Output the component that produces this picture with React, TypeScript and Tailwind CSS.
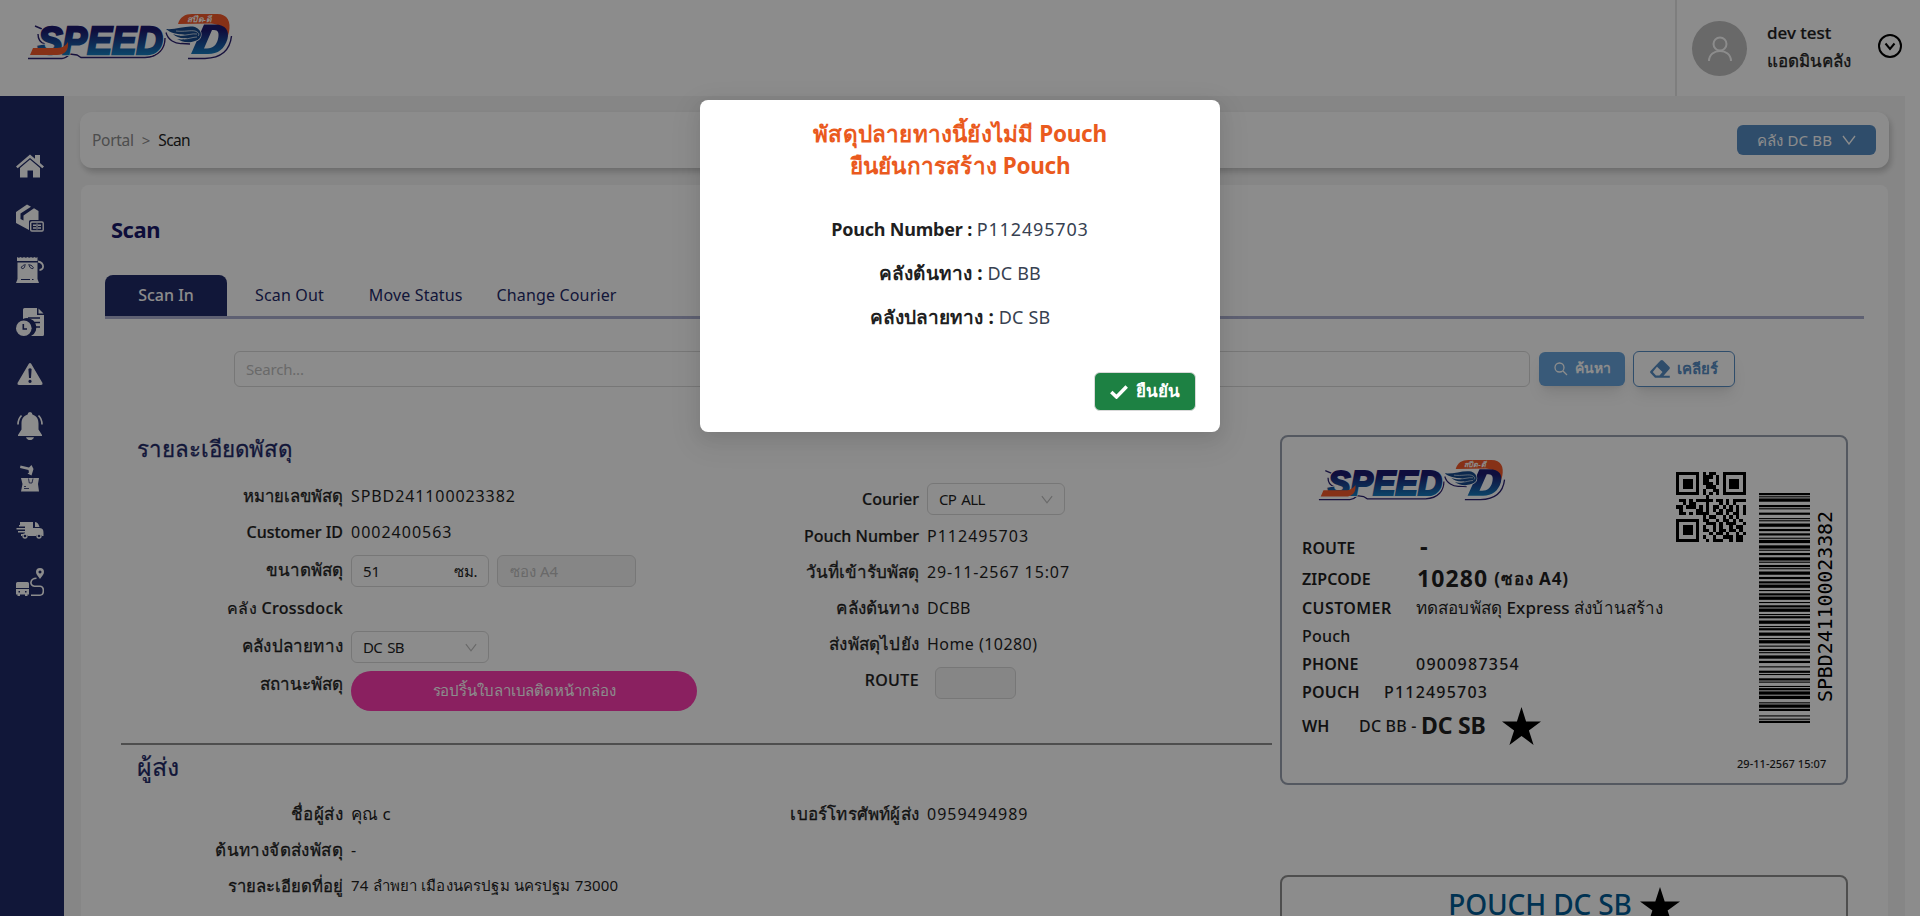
import React from 'react';

const QR = [
  '#######.#.##..#######',
  '#.....#.###.#.#.....#',
  '#.###.#.##..#.#.###.#',
  '#.###.#.###.#.#.###.#',
  '#.###.#..###..#.###.#',
  '#.....#.#..##.#.....#',
  '#######.#.#.#.#######',
  '.........#...........',
  '.##.#.#####.##.#.####',
  '..#.##...#...#.#.#...',
  '##.###.#.#.##.#.#.#.#',
  '.#....##.#.#.#.##.#.#',
  '.##.#.####..##.#.##.#',
  '........#.##..#.#.#..',
  '#######.##..#.##.#.#.',
  '#.....#..###.#.###..#',
  '#.###.#.#..#.#..#.##.',
  '#.###.#.##.#.##.##.#.',
  '#.###.#...#.##.#..#.#',
  '#.....#.#..#..###.##.',
  '#######..#.###..#.##.',
];

const CODE128 = [
  '211214', '213113', '313121', '131123', '112313', '223211', '221231', '123221', '123221',
  '123122', '123122', '123122', '223211', '221132', '221132', '311222', '223211', '132311', '2331112',
].join('');

function barRects() {
  const out: { x: number; w: number }[] = [];
  let x = 0;
  CODE128.split('').forEach((c, i) => {
    const w = Number(c);
    if (i % 2 === 0) out.push({ x, w });
    x += w;
  });
  return out;
}

function Logo({ className, id }: { className: string; id: string }) {
  return (
    <svg viewBox="0 0 205 46" className={`overflow-visible ${className}`} preserveAspectRatio="none">
      <defs>
        <linearGradient id={id} gradientUnits="userSpaceOnUse" x1="0" y1="10" x2="0" y2="42">
          <stop offset="0.2" stopColor="#1d1a70" />
          <stop offset="1" stopColor="#1583c4" />
        </linearGradient>
      </defs>
      <g fontFamily="Liberation Sans" fontWeight="bold" fontStyle="italic">
        <path d="M1 44.500 L35 44.500 C39 44.500 41 42 43 40 L50 41 L54 43.500 H118 C132 43 138 34 138 24" fill="none" stroke="#2a2170" strokeWidth="1.400" />
        <path d="M8 12 L15 15 M11 20 C11 26 14 29 18 30" fill="none" stroke="#2a2170" strokeWidth="1.400" />
        <text x="11" y="39.500" fontSize="39" textLength="125" lengthAdjust="spacingAndGlyphs" fill="#fff" stroke="#fff" strokeWidth="4">SPEED</text>
        <text x="11" y="39.500" fontSize="39" textLength="125" lengthAdjust="spacingAndGlyphs" fill={`url(#${id})`} stroke={`url(#${id})`} strokeWidth="2.400">SPEED</text>
        <path d="M6 34 H30 C36 34 39 31 41 28 C42 36 38 41 30 41 H3 Z" fill="#f4592a" />
        <path d="M151 10 C153 3 158 0 165 0 H190 C201 0 204 8 202 18 C201 22 200 24 199 26 C199 16 194 10 184 9.500 Z" fill="#f4592a" />
        <text x="160" y="7.500" fontSize="8" fill="#fff" textLength="24" lengthAdjust="spacingAndGlyphs">สปีด-ดี</text>
        <path d="M161 44.500 H178 C194 44 203 36 204.500 22" fill="none" stroke="#2a2170" strokeWidth="1.400" />
        <path fillRule="evenodd" d="M177 10.500 H188 C199 10.500 202.500 17 200.500 25 C197.500 35 191 40 181 40 H164 Z M185 16 L177 34.500 H180 C186 34.500 189.500 31 191 25 C192.500 19 191 16 187 16 Z" fill={`url(#${id})`} />
        <path d="M139 15 C149 16 160 11 168 13 C176 16 176 25 168 27 C160 30 154 27 150 25 C156 26 159 25 161 24 C154 25 149 23 146 20 C151 22 155 22 158 21 C150 20 143 19 139 15 Z" fill="#174a8c" stroke="#fff" strokeWidth="1.200" paintOrder="stroke" />
        <path d="M149 17 C158 18 163 16 168 17 C171 18 173 20 171 22 M153 21 C160 22 165 19 170 20 M157 25 C162 25 166 23 170 23" fill="none" stroke="#fff" strokeWidth="0.700" />
        <path d="M139 18.500 C141 26 148 30 155 29.500 L163 30" fill="none" stroke="#2a2170" strokeWidth="1.300" />
      </g>
    </svg>
  );
}

function Star({ className }: { className: string }) {
  return (
    <svg viewBox="0 0 40 38" className={className} preserveAspectRatio="none">
      <path d="M20 0 L24.7 14.5 H40 L27.6 23.5 L32.4 38 L20 29 L7.6 38 L12.4 23.5 L0 14.5 H15.3 Z" fill="#000" />
    </svg>
  );
}

function Chevron({ className }: { className: string }) {
  return (
    <svg viewBox="0 0 14 10" className={className} fill="none" stroke="currentColor" strokeWidth="1.3">
      <path d="M1 1 L7 9 L13 1" />
    </svg>
  );
}

const ICONS: React.ReactNode[] = [
  <g key="home">
    <path d="M14 7.5 L24 16 V25.5 H17 V18.5 H11.5 V25.5 H4 V16 Z" />
    <path d="M14 2.5 L19 6.8 V3 H24 V11 L28 14.6 L26.3 16.3 L14 6 L1.7 16.3 L0 14.6 Z" />
  </g>,
  <g key="box">
    <path d="M0 8 L11 0.5 L15 2.7 L4.500 9.6 V15 L7.500 16.6 V11.4 L18 4.300 L22.5 7 V16 H14.500 Q13 16 13 17.500 V26 L0 19 Z" />
    <rect x="14.700" y="18" width="12.500" height="9" rx="1.2" fill="none" stroke="#fff" strokeWidth="1.4" />
    <path d="M17 20.500 h3 v1.4 h-3z M22 20.500 h3 v1.4 h-3z M17 23.300 h3 v1.4 h-3z M22 23.300 h3 v1.4 h-3z M20.4 19.500 h1.2 v6 h-1.2z" />
  </g>,
  <g key="pouch">
    <path d="M1 1 q1.8 1.5 3.5 0 q1.8 1.5 3.5 0 q1.8 1.5 3.5 0 q1.8 1.5 3.5 0 q1.8 1.5 3.5 0 q1.6 1.5 3 0 V5 H1 Z" />
    <path d="M1.5 6.500 H21.5 V23 L23 27 H0 L1.5 23 Z" />
    <path d="M9 8 C9 11 8 13 6 12.5 C4 11.5 7 9.5 8 9 M13 8 C13 11 15 13 17 12.5 C18.5 11.5 15 9 14 9 M5 23.5 H14 M16 23.5 h1.5" fill="none" stroke="#1f2a69" strokeWidth="1" />
    <path d="M22 5.5 C29 7 28 14 23.5 14" fill="none" stroke="#fff" strokeWidth="1.8" />
  </g>,
  <g key="doc">
    <path d="M7 1.5 Q7 0 8.5 0 H21 V7 H28 V26.5 Q28 28 26.500 28 H15 A9 9 0 0 0 7 11 Z" />
    <path d="M22.500 0.500 L27.500 5.500 H22.500 Z" />
    <path d="M12 10 H24 M15 14.5 H24 M17 19 H24" stroke="#1f2a69" strokeWidth="1.3" />
    <circle cx="7.8" cy="20.200" r="7.8" />
    <path d="M7.300 16 V21 H11" fill="none" stroke="#1f2a69" strokeWidth="1.6" />
  </g>,
  <g key="warn">
    <path fillRule="evenodd" d="M12.800 3.800 Q14 2 15.200 3.800 L26.500 23 Q27 25 25 25 H3 Q1 25 1.500 23 Z M12.400 9 L13 18 H15 L15.600 9 Q14 7.500 12.400 9 Z M14 19.800 A1.600 1.600 0 1 0 14.010 19.800 Z" />
  </g>,
  <g key="bell">
    <path d="M14 0 A2.500 2.500 0 0 1 16.400 2.500 C21 4 22.500 7.500 22.500 11.500 V17.500 L26 23 V24 H2 V23 L5.500 17.500 V11.500 C5.500 7.500 7 4 11.600 2.500 A2.500 2.500 0 0 1 14 0 Z" />
    <path d="M10 25.200 H18 Q17 28 14 28 Q11 28 10 25.200 Z" />
    <path d="M5.500 3.500 Q2 7 2 12.500 M22.500 3.500 Q26 7 26 12.500" fill="none" stroke="#fff" strokeWidth="1.7" />
  </g>,
  <g key="drop">
    <path d="M4.500 1.500 L13 3.500 L15.500 1 L17.500 5 L15.500 11.500 L11.500 9.500 L13 8.500 L12.500 6 L4 4 Z" />
    <path d="M5 14 H23 L22 20 L23 27.500 H5 L6.500 20 Z" />
    <path d="M12.500 14.500 L13.300 19 H16 L17 14.500 M8 24.500 h5 M8 22.500 h2" fill="none" stroke="#1f2a69" strokeWidth="0.8" />
  </g>,
  <g key="van">
    <path d="M4 6 H17 V12 H23.500 C27 12.500 27.500 14 27.500 17 V20 H26 A3.200 3.200 0 0 0 20 20 H12 A3.200 3.200 0 0 0 6 20 H5 V18 H9 V16.500 H2 V15 H9 V13.500 H0.500 V12 H9 V10.500 H3 V9 H4 Z" />
    <path d="M19 6 C21.500 6 23 9 23.500 11 H19 Z" />
    <circle cx="9" cy="20" r="2" fill="none" stroke="#fff" strokeWidth="1.300" />
    <circle cx="23" cy="20" r="2" fill="none" stroke="#fff" strokeWidth="1.300" />
  </g>,
  <g key="route">
    <path d="M0 15.500 Q0 14 1.500 14 H11.500 Q13 14 13 15.500 V20 H0 Z M0 21 H13 V26.500 H11.500 V28 H9 V26.500 H4 V28 H1.500 V26.500 H0 Z" />
    <path d="M2.500 23.800 h1.500 M9 23.800 h1.500" stroke="#1f2a69" strokeWidth="1.500" />
    <path fillRule="evenodd" d="M24 0 A4 4 0 0 1 28 4 C28 6.500 26 8 24 11 C22 8 20 6.500 20 4 A4 4 0 0 1 24 0 Z M24 2.500 A1.500 1.500 0 1 0 24.010 2.500 Z" />
    <path d="M20.500 10.300 C14 10.500 13 17.500 18.500 18.200 H24 C28.500 18.500 28.500 27 24 27.200 H15" fill="none" stroke="#fff" strokeWidth="1.600" />
  </g>,
];

const THAI = 'text-[17px] [-webkit-text-stroke:0.3px]';
const LATIN = '[-webkit-text-stroke:0.2px]';

function Row({ label, h, labelClass = THAI, children }: { label: string; h: string; labelClass?: string; children?: React.ReactNode }) {
  return (
    <div className={`flex items-center ${h}`}>
      <div className={`w-[207px] shrink-0 text-right font-medium whitespace-nowrap ${labelClass}`}>{label}</div>
      <div className="ml-2 flex shrink-0 items-center whitespace-nowrap">{children}</div>
    </div>
  );
}

function Num({ children }: { children: React.ReactNode }) {
  return <span className="tracking-[1px]">{children}</span>;
}

function SelectBox({ children }: { children: React.ReactNode }) {
  return (
    <div className="flex h-8 w-[138px] items-center justify-between rounded-md border border-[#d9d9d9] px-[11px] text-[15px] tracking-[-0.7px]">
      <span className="[word-spacing:2px]">{children}</span>
      <Chevron className="h-[9px] w-3 text-[#bfbfbf]" />
    </div>
  );
}

export default function App() {
  return (
    <div className="relative flex h-[916px] w-full flex-col overflow-hidden bg-white font-['Noto_Sans',sans-serif] text-[16px] leading-[24px] text-[#1f1f1f]">
      <header className="flex h-24 shrink-0">
        <Logo id="lg1" className="mt-[14px] ml-[27px] h-[46px] w-[205px]" />
        <div className="ml-auto flex w-[245px] border-l-2 border-[#e5e5e5]">
          <div className="mt-[21px] ml-[15px] flex size-[55px] items-center justify-center rounded-full bg-[#bfbfbf] text-white">
            <svg viewBox="0 0 24 26" className="h-[26px] w-6" fill="none" stroke="currentColor" strokeWidth="2">
              <circle cx="12" cy="8" r="6.5" />
              <path d="M1 25 C1 11.500 23 11.500 23 25" />
            </svg>
          </div>
          <div className="mt-[19px] ml-5 w-[111px] text-[17px] leading-[28px] font-medium">
            <div className="[-webkit-text-stroke:0.200px]">dev test</div>
            <div className="whitespace-nowrap [-webkit-text-stroke:0.3px]">แอดมินคลัง</div>
          </div>
          <svg viewBox="0 0 24 24" className="mt-[34px] size-6" fill="none" stroke="#000" strokeWidth="2">
            <circle cx="12" cy="12" r="11" />
            <path d="M7.500 9.500 L12 15 L16.500 9.500" />
          </svg>
        </div>
      </header>

      <div className="flex min-h-0 flex-1">
        <aside className="flex w-16 shrink-0 flex-col gap-6 bg-[#1f2a69] pt-14 pl-4">
          {ICONS.map((icon, i) => (
            <svg key={i} viewBox="0 0 28 28" className="size-7 shrink-0" fill="#fff">
              {icon}
            </svg>
          ))}
        </aside>

        <main className="flex w-[1841px] shrink-0 flex-col bg-[#f5f5f5] pt-4 pr-4 pl-4">
          <div className="flex h-14 shrink-0 items-center rounded-xl bg-white pr-[13px] pl-3 shadow-[2px_4px_6px_rgba(0,0,0,0.2)]">
            <span className="text-[15.500px] tracking-[-0.300px] text-[#8c8c8c]">Portal</span>
            <span className="mx-2 text-[15px] text-[#8c8c8c]">&gt;</span>
            <span className="text-[15.500px] tracking-[-0.600px]">Scan</span>
            <div className="ml-auto flex h-[30px] w-[139px] items-center justify-center gap-2.5 rounded-md bg-[#578dc4] text-[15px] text-white">
              <span className="tracking-[0.200px]">คลัง DC BB</span>
              <Chevron className="h-[10px] w-[14px]" />
            </div>
          </div>

          <section className="mt-[17px] mr-px ml-px flex min-h-0 flex-1 flex-col rounded-t-lg bg-white pt-[29px] pl-6">
            <h1 className="pl-[6px] text-[22px] leading-[30px] font-bold tracking-[-0.500px] text-[#19196b]">Scan</h1>
            <div className="mt-[31px] flex h-[44px] w-[1759px] shrink-0 border-b-[3px] border-[#acafd0] leading-[40px] tracking-[0.150px] text-[#1f2a69]">
              <div className="w-[122px] rounded-t-lg bg-[#1f2a69] text-center font-medium tracking-normal text-white">Scan In</div>
              <div className="ml-[28px]">Scan Out</div>
              <div className="ml-[45px]">Move Status</div>
              <div className="ml-[34px]">Change Courier</div>
            </div>
            <div className="mt-8 flex h-9 shrink-0 items-center pl-[129px]">
              <div className="flex h-9 w-[1296px] items-center rounded-md border border-[#d9d9d9] pl-[11px] text-[15px] tracking-[-0.200px] text-[#bfbfbf]">Search...</div>
              <div className="ml-[9px] flex h-[34px] w-[86px] items-center justify-center gap-[7px] rounded-md bg-[#68a4dc] text-[14px] font-bold text-white shadow-lg">
                <svg viewBox="0 0 14 14" className="size-[14px]" fill="none" stroke="currentColor" strokeWidth="1.300">
                  <circle cx="5.500" cy="5.500" r="4.500" />
                  <path d="M9 9 L13 13" />
                </svg>
                <span className="-mt-[2px]">ค้นหา</span>
              </div>
              <div className="ml-2 flex h-9 w-[102px] items-center justify-center gap-[7px] rounded-md border border-[#578dc4] bg-white text-[15px] font-bold text-[#578dc4] shadow-lg">
                <svg viewBox="0 0 20 18" className="h-[18px] w-5" fill="currentColor">
                  <path fillRule="evenodd" d="M10.500 0.500 Q12 -0.500 13 0.500 L19.500 7 Q20.200 8 19.500 9 L13.500 15.800 H19.800 V17.800 H5 L0.500 13 Q-0.300 12 0.500 11 Z M7 6.800 L2.800 12 L6 15.600 H9.500 L12.500 12 Z" />
                </svg>
                <span className="-mt-[2px]">เคลียร์</span>
              </div>
            </div>

            <div className="mt-12 flex min-h-0 flex-1">
              <div className="w-[1175px] shrink-0">
                <h2 className="-mt-px h-[44px] pl-8 text-[22.300px] leading-[30px] font-medium text-[#1f2a69] [-webkit-text-stroke:0.300px]">รายละเอียดพัสดุ</h2>
                <div className="flex h-[265px]">
                  <div className="w-[576px] shrink-0 pl-[31px]">
                    <Row h="h-9" label="หมายเลขพัสดุ" labelClass="text-[16.700px] [-webkit-text-stroke:0.300px]"><span className="tracking-[0.900px]">SPBD241100023382</span></Row>
                    <Row h="h-9" label="Customer ID" labelClass={LATIN}><Num>0002400563</Num></Row>
                    <Row h="h-[42px]" label="ขนาดพัสดุ" labelClass={`${THAI} pb-[2px]`}>
                      <div className="flex h-8 w-[138px] items-center justify-between rounded-md border border-[#d9d9d9] px-[11px] text-[15px]">
                        <span>51</span>
                        <span className="tracking-[-0.500px]">ซม.</span>
                      </div>
                      <div className="ml-2 flex h-8 w-[139px] items-center rounded-md border border-[#d9d9d9] bg-[#f5f5f5] pl-3 text-[15px] text-[#bfbfbf]">ซอง A4</div>
                    </Row>
                    <Row h="h-[34px]" label="คลัง Crossdock" labelClass={`${LATIN} pb-[2px] tracking-[0.350px]`} />
                    <Row h="h-[42px]" label="คลังปลายทาง" labelClass={`${THAI} pb-[2px] tracking-[0.200px]`}>
                      <SelectBox>DC SB</SelectBox>
                    </Row>
                    <div className="flex pt-[3px]">
                      <div className="mt-px w-[207px] shrink-0 text-right text-[17px] font-medium [-webkit-text-stroke:0.300px]">สถานะพัสดุ</div>
                      <div className="ml-2 h-10 w-[346px] shrink-0 rounded-[20px] bg-[#fb3baf] text-center text-[15px] leading-[38px] tracking-[-0.100px] whitespace-nowrap text-white">รอปริ้นใบลาเบลติดหน้ากล่อง</div>
                    </div>
                  </div>
                  <div className="pl-[31px]">
                    <Row h="h-[42px]" label="Courier" labelClass={`${LATIN} pb-px`}>
                      <SelectBox>CP ALL</SelectBox>
                    </Row>
                    <div className="-mt-0.5">
                      <Row h="h-9" label="Pouch Number" labelClass={LATIN}><Num>P112495703</Num></Row>
                      <Row h="h-9" label="วันที่เข้ารับพัสดุ"><span className="tracking-[0.900px]">29-11-2567 15:07</span></Row>
                      <Row h="h-9" label="คลังต้นทาง" labelClass={`${THAI} tracking-[0.200px]`}><span className="tracking-[0.300px]">DCBB</span></Row>
                      <Row h="h-9" label="ส่งพัสดุไปยัง" labelClass={`${THAI} tracking-[0.200px]`}><span className="tracking-[0.450px]">Home (10280)</span></Row>
                      <Row h="h-9" label="ROUTE" labelClass={`${LATIN} tracking-[0.400px]`}>
                        <div className="mt-[6px] ml-2 h-8 w-[81px] rounded-md border border-[#d9d9d9] bg-[#f5f5f5]" />
                      </Row>
                    </div>
                  </div>
                </div>
                <div className="ml-4 w-[1151px] border-t-2 border-[#8f8f8f]" />
                <h2 className="mt-[6px] h-[45px] pl-8 text-[25px] leading-[30px] font-medium text-[#1f2a69] [-webkit-text-stroke:0.200px]">ผู้ส่ง</h2>
                <div className="flex">
                  <div className="w-[576px] shrink-0 pl-[31px]">
                    <Row h="h-9" label="ชื่อผู้ส่ง" labelClass={`${THAI} tracking-[0.500px]`}><span className="text-[17px]">คุณ c</span></Row>
                    <Row h="h-9" label="ต้นทางจัดส่งพัสดุ" labelClass={`${THAI} tracking-[0.400px]`}>-</Row>
                    <Row h="h-9" label="รายละเอียดที่อยู่" labelClass="text-[16.700px] [-webkit-text-stroke:0.300px]">
                      <span className="mb-[2px] text-[15px] tracking-[0.150px]">74 ลำพยา เมืองนครปฐม นครปฐม 73000</span>
                    </Row>
                  </div>
                  <div className="pl-[31px]">
                    <Row h="h-9" label="เบอร์โทรศัพท์ผู้ส่ง" labelClass={`${THAI} tracking-[0.200px]`}><Num>0959494989</Num></Row>
                  </div>
                </div>
              </div>

              <div className="w-[568px] shrink-0">
                <div className="flex h-[350px] rounded-lg border-2 border-gray-400">
                  <div className="w-[394px] shrink-0 pl-5 font-medium whitespace-nowrap">
                    <Logo id="lg2" className="mt-[23px] ml-4 h-[41px] w-[187px]" />
                    <div className="mt-[31px] flex h-8 items-center">
                      <span className="w-[118px] font-semibold tracking-[0.100px]">ROUTE</span>
                      <span className="-mt-1 text-[24px] font-bold">-</span>
                    </div>
                    <div className="flex h-[30px] items-center">
                      <span className="w-[115px] font-semibold tracking-[0.100px]">ZIPCODE</span>
                      <span className="-mt-[2px] text-[23px] font-bold tracking-[1.100px]">10280</span>
                      <span className="ml-1.5 text-[17px] font-bold tracking-[0.900px]">(ซอง A4)</span>
                    </div>
                    <div className="flex h-7 items-center">
                      <span className="w-[114px] font-semibold tracking-[0.400px]">CUSTOMER</span>
                      <span className="text-[17px] tracking-[0.120px]">ทดสอบพัสดุ Express ส่งบ้านสร้าง</span>
                    </div>
                    <div className="flex h-7 items-center tracking-[0.200px]">Pouch</div>
                    <div className="flex h-7 items-center">
                      <span className="w-[114px] font-semibold tracking-[0.100px]">PHONE</span>
                      <span className="tracking-[1.250px]">0900987354</span>
                    </div>
                    <div className="flex h-7 items-center">
                      <span className="w-[82px] font-semibold tracking-[0.200px]">POUCH</span>
                      <span className="tracking-[1.200px]">P112495703</span>
                    </div>
                    <div className="flex h-[40px] items-center">
                      <span className="w-[57px] font-semibold">WH</span>
                      <span className="tracking-[0.200px]">DC BB -&nbsp;</span>
                      <span className="-mt-[2px] text-[23px] font-bold tracking-[-0.200px]">DC SB</span>
                      <Star className="ml-4 h-[38px] w-[39px]" />
                    </div>
                  </div>
                  <svg viewBox="0 0 21 21" className="mt-[35px] size-[70px] shrink-0" shapeRendering="crispEdges">
                    {QR.map((r, y) => r.split('').map((c, x) => (c === '#' ? <rect key={`${x}-${y}`} x={x} y={y} width="1" height="1" /> : null)))}
                  </svg>
                  <div className="flex w-[100px] shrink-0 flex-col">
                    <div className="mt-14 flex h-[230px] pl-[13px]">
                      <svg viewBox="0 0 50 211" className="h-[230px] w-[51px] shrink-0" preserveAspectRatio="none">
                        {barRects().map((b) => (
                          <rect key={b.x} x="0" width="50" y={211 - b.x - b.w} height={b.w} />
                        ))}
                      </svg>
                      <div className="ml-[3px] flex w-6 shrink-0 items-center justify-center pb-[3px]">
                        <span className="shrink-0 rotate-180 font-['DejaVu_Sans_Mono'] text-[20px] leading-6 tracking-[-0.100px] text-black [writing-mode:vertical-rl]">SPBD241100023382</span>
                      </div>
                    </div>
                    <div className="mt-[33px] -ml-[9px] text-[11px] leading-4 font-medium tracking-[0.050px] whitespace-nowrap">29-11-2567 15:07</div>
                  </div>
                </div>
                <div className="mt-[90px] flex h-[120px] justify-center rounded-lg border-2 border-[#8f8f8f] text-[28px] leading-[54px] font-medium tracking-[-0.150px] text-[#005b95]">
                  POUCH DC SB
                  <Star className="mt-[10px] ml-2 h-[38px] w-[40px]" />
                </div>
              </div>
            </div>
          </section>
        </main>
      </div>

      <div className="absolute inset-0 flex items-start justify-center bg-black/45 pt-[100px]">
        <div className="flex h-[332px] w-[520px] flex-col rounded-lg bg-white px-6 pt-[18px] text-center shadow-[0_6px_16px_rgba(0,0,0,0.08),0_9px_28px_8px_rgba(0,0,0,0.05)]">
          <h3 className="text-[22.500px] leading-8 font-bold text-[#ea5a1e]">
            <span className="tracking-[0.200px]">พัสดุปลายทางนี้ยังไม่มี</span> <span className="tracking-[-0.300px]">Pouch</span>
            <br />
            <span className="tracking-[0.200px]">ยืนยันการสร้าง</span> <span className="tracking-[-0.300px]">Pouch</span>
          </h3>
          <div className="mt-[25px] text-[18px] leading-[44px] text-[#374151]">
            <div><span className="font-bold tracking-[-0.200px] text-[#1f1f1f]">Pouch Number :</span> <span className="tracking-[0.850px]">P112495703</span></div>
            <div><span className="text-[19px] font-bold tracking-[0.150px] text-[#1f1f1f]">คลังต้นทาง :</span> <span className="tracking-[0.200px]">DC BB</span></div>
            <div><span className="text-[19px] font-bold tracking-[0.100px] text-[#1f1f1f]">คลังปลายทาง :</span> <span className="tracking-[0.200px]">DC SB</span></div>
          </div>
          <button className="mt-[33px] ml-auto flex h-[39px] w-[102px] items-center justify-center gap-2 rounded-md border border-[#d9d9d9] bg-[#1d8143] pb-[2px] text-[17px] leading-[34px] font-bold text-white">
            <svg viewBox="0 0 18 14" className="mt-[3px] h-[14px] w-[18px]" fill="none" stroke="currentColor" strokeWidth="3.500">
              <path d="M1.300 7 L6.500 12 L16.700 1.500" />
            </svg>
            ยืนยัน
          </button>
        </div>
      </div>
    </div>
  );
}
